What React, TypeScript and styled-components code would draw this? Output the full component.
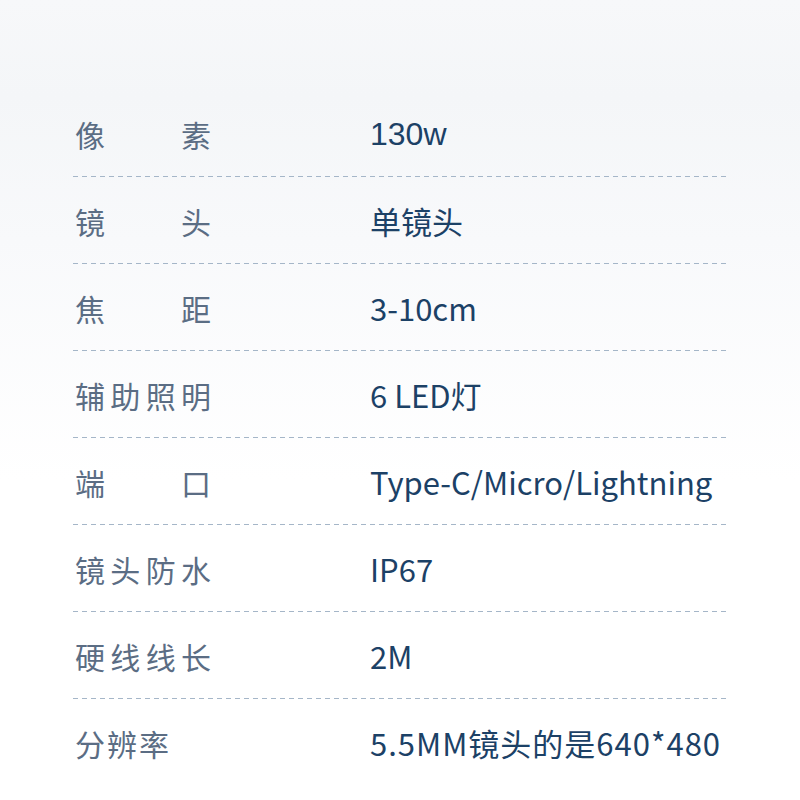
import React from "react";
import styled, { createGlobalStyle } from "styled-components";

const Global = createGlobalStyle`
  html, body { margin: 0; padding: 0; }
  body {
    width: 800px;
    height: 800px;
    overflow: hidden;
    background: linear-gradient(180deg, #f7f8fa 0%, #f4f6f8 12%, #f8f9fb 30%, #ffffff 60%, #ffffff 100%);
    font-family: "Noto Sans CJK SC", "Noto Sans", sans-serif;
  }
`;

const Page = styled.div`
  width: 800px;
  height: 800px;
  box-sizing: border-box;
  padding: 90px 73px 0 73px;
`;

const Table = styled.div`
  display: flex;
  flex-direction: column;
  width: 654px;
`;

const Row = styled.div<{ $last?: boolean }>`
  display: grid;
  grid-template-columns: 297px 1fr;
  align-items: center;
  height: 87px;
  box-sizing: border-box;
  background-image: ${(p) =>
    p.$last
      ? "none"
      : "linear-gradient(90deg, #a5b6c8 0 5px, transparent 5px 9px)"};
  background-size: 9px 1px;
  background-repeat: repeat-x;
  background-position: 0 100%;
`;

const Label = styled.div<{ $justify?: boolean }>`
  width: ${(p) => (p.$justify ? "136px" : "auto")};
  padding-left: 2px;
  font-size: 30px;
  line-height: 1;
  color: #5b6d84;
  letter-spacing: ${(p) => (p.$justify ? "0" : "2px")};
  text-align: ${(p) => (p.$justify ? "justify" : "left")};
  text-align-last: ${(p) => (p.$justify ? "justify" : "auto")};
  white-space: nowrap;
`;

const Value = styled.div<{ $arial?: boolean; $wide?: boolean }>`
  font-size: ${(p) => (p.$arial ? "32px" : "31px")};
  line-height: 1;
  color: #1c4166;
  white-space: nowrap;
  letter-spacing: ${(p) => (p.$wide ? "1px" : "0")};
  font-family: ${(p) =>
    p.$arial
      ? '"Liberation Sans", Arial, sans-serif'
      : '"Noto Sans CJK SC", "Noto Sans", sans-serif'};
`;

const rows: {
  label: string;
  value: string;
  justify: boolean;
  arial?: boolean;
  wide?: boolean;
}[] = [
  { label: "像素", value: "130w", justify: true, arial: true },
  { label: "镜头", value: "单镜头", justify: true },
  { label: "焦距", value: "3-10cm", justify: true },
  { label: "辅助照明", value: "6 LED灯", justify: true },
  { label: "端口", value: "Type-C/Micro/Lightning", justify: true },
  { label: "镜头防水", value: "IP67", justify: true },
  { label: "硬线线长", value: "2M", justify: true },
  { label: "分辨率", value: "5.5MM镜头的是640*480", justify: false, wide: true },
];

export default function App() {
  return (
    <>
      <Global />
      <Page>
        <Table>
          {rows.map((r, i) => (
            <Row key={r.label} $last={i === rows.length - 1}>
              <Label $justify={r.justify}>{r.label}</Label>
              <Value $arial={r.arial} $wide={r.wide}>
                {r.value}
              </Value>
            </Row>
          ))}
        </Table>
      </Page>
    </>
  );
}
